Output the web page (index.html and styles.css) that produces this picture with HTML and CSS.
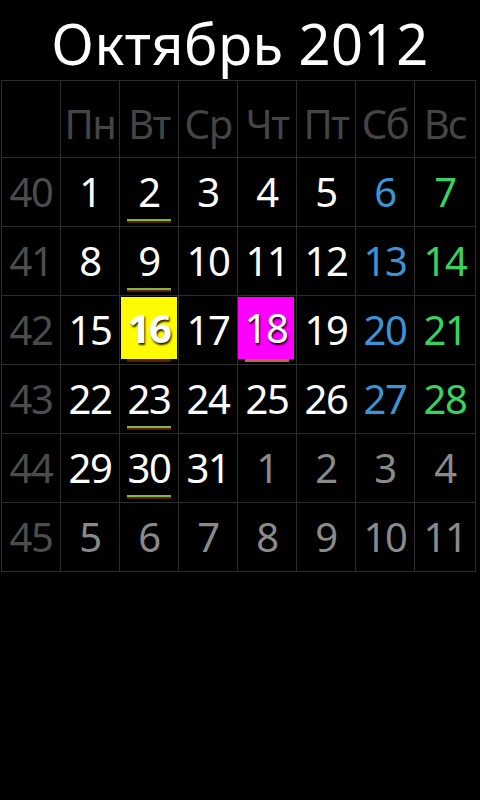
FILE: index.html
```
<!DOCTYPE html>
<html lang="ru">
<head>
<meta charset="utf-8">
<link rel="stylesheet" href="styles.css">
</head>
<body>
<h1 class="title">Октябрь 2012</h1>
<div class="cal">
  <div class="c hd"></div>
  <div class="c hd">Пн</div><div class="c hd">Вт</div><div class="c hd">Ср</div><div class="c hd">Чт</div><div class="c hd">Пт</div><div class="c hd">Сб</div><div class="c hd">Вс</div>

  <div class="c wk">40</div>
  <div class="c">1</div><div class="c ul">2</div><div class="c">3</div><div class="c">4</div><div class="c">5</div><div class="c sat">6</div><div class="c sun">7</div>

  <div class="c wk">41</div>
  <div class="c">8</div><div class="c ul">9</div><div class="c">10</div><div class="c">11</div><div class="c">12</div><div class="c sat">13</div><div class="c sun">14</div>

  <div class="c wk">42</div>
  <div class="c">15</div><div class="c today"><span class="box yellow">16</span></div><div class="c">17</div><div class="c marked"><span class="box magenta">18</span></div><div class="c">19</div><div class="c sat">20</div><div class="c sun">21</div>

  <div class="c wk">43</div>
  <div class="c">22</div><div class="c ul">23</div><div class="c">24</div><div class="c">25</div><div class="c">26</div><div class="c sat">27</div><div class="c sun">28</div>

  <div class="c wk">44</div>
  <div class="c">29</div><div class="c ul">30</div><div class="c">31</div><div class="c om">1</div><div class="c om">2</div><div class="c om">3</div><div class="c om">4</div>

  <div class="c wk">45</div>
  <div class="c om">5</div><div class="c om">6</div><div class="c om">7</div><div class="c om">8</div><div class="c om">9</div><div class="c om">10</div><div class="c om">11</div>
</div>
</body>
</html>
```
FILE: styles.css
```
html, body {
  margin: 0;
  padding: 0;
  background: #000;
}
body {
  width: 480px;
  height: 800px;
  font-family: "Noto Sans", "Open Sans", sans-serif;
  color: #fff;
}
.title {
  margin: 0;
  height: 80px;
  font-weight: 400;
  font-size: 56px;
  line-height: 86px;
  text-align: center;
  letter-spacing: 0.5px;
}
.cal {
  margin-left: 1px;
  display: grid;
  grid-template-columns: repeat(7, 59px) 61px;
  grid-template-rows: 77px repeat(6, 69px);
  border-top: 1px solid #2d2d2d;
  border-left: 1px solid #2d2d2d;
  width: max-content;
}
.c {
  position: relative;
  border-right: 1px solid #2d2d2d;
  border-bottom: 1px solid #2d2d2d;
  display: flex;
  align-items: center;
  justify-content: center;
  font-size: 40px;
  line-height: 1;
  letter-spacing: -1.5px;
  color: #fff;
}
.hd {
  color: #454545;
  padding-top: 10px;
}
.wk { color: #4c4c4c; }
.om { color: #8a8a8a; }
.sat { color: #3a95d8; }
.sun { color: #38d35e; }
.ul::after {
  content: "";
  position: absolute;
  left: 7px;
  right: 7px;
  bottom: 3px;
  height: 4px;
  background: linear-gradient(#84b44a 0, #84b44a 45%, #6a2a0c 45%, #4a1a08 100%);
}
.box {
  position: absolute;
  top: 1px;
  left: 1px;
  right: 1px;
  bottom: 5px;
  display: flex;
  align-items: center;
  justify-content: center;
  text-shadow: 1px 2px 2px rgba(0,0,0,0.85);
}
.yellow {
  background: #fffb00;
  font-weight: 700;
}
.magenta {
  background: #ff00ff;
  left: 0;
  right: 2px;
}
.today::after {
  content: "";
  position: absolute;
  left: 7px;
  right: 7px;
  bottom: 2px;
  height: 3px;
  background: #5a1c08;
}
.marked::after {
  content: "";
  position: absolute;
  left: 7px;
  right: 7px;
  bottom: 2px;
  height: 3px;
  background: #b0703a;
}
```
